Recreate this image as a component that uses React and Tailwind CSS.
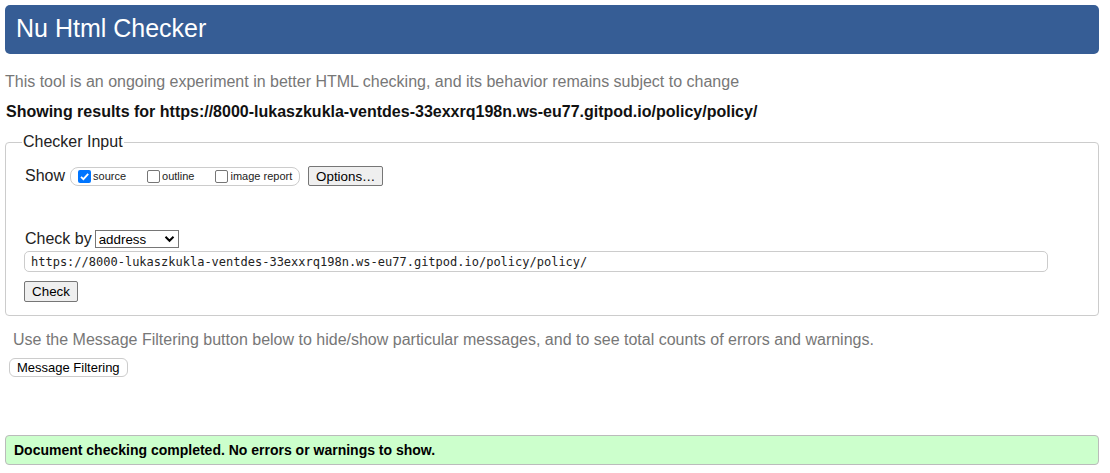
const URL = 'https://8000-lukaszkukla-ventdes-33exxrq198n.ws-eu77.gitpod.io/policy/policy/';

function Checkbox({ checked }) {
  if (checked) {
    return (
      <span className="flex h-[13px] w-[13px] items-center justify-center rounded-[2px] bg-[#0075ff]">
        <svg width="11" height="11" viewBox="0 0 11 11">
          <path d="M2 5.8 L4.4 8.2 L9.2 2.8" fill="none" stroke="white" strokeWidth="1.8" />
        </svg>
      </span>
    );
  }
  return <span className="h-[13px] w-[13px] rounded-[2px] border border-[#767676] bg-white" />;
}

function ShowOption({ label, checked, last }) {
  return (
    <label className={['flex items-center gap-[1px]', last ? '' : 'mr-[21px]'].join(' ')}>
      <Checkbox checked={checked} />
      <span className="ml-[1px] text-[11px] leading-[13px] text-[#222]">{label}</span>
    </label>
  );
}

function NativeButton({ children, className = '' }) {
  return (
    <button
      type="button"
      className={[
        'border border-[#767676] bg-[#efefef] text-[13.33px] leading-[15px] text-black',
        className,
      ].join(' ')}
    >
      {children}
    </button>
  );
}

export default function App() {
  return (
    <div className="min-h-screen bg-white font-['Liberation_Sans',Arial,sans-serif] text-[#222]">
      <div className="ml-[5px] w-[1094px] pt-[5px]">
        {/* Title bar */}
        <div className="flex h-[49px] items-center rounded-[5px] bg-[#365d95] pl-[11px] pb-[2px] text-[25px] text-white">
          Nu Html Checker
        </div>

        <p className="mt-[19px] text-[16px] leading-[18px] text-[#777]">
          This tool is an ongoing experiment in better HTML checking, and its behavior remains subject to change
        </p>
        <p className="mt-[12px] pl-[1px] text-[16px] font-bold leading-[18px] text-[#111]">
          Showing results for {URL}
        </p>

        <fieldset className="mt-[12px] rounded-[4px] border border-[#ccc] px-[19px] pt-[15px] pb-[12px]">
          <legend className="-ml-[3px] px-[1px] text-[16px] leading-[18px] text-[#222]">Checker Input</legend>

          <div className="flex items-center">
            <span className="text-[16px] leading-[18px]">Show</span>
            <div className="ml-[5px] flex h-[19px] items-center rounded-[8px] border border-[#ccc] px-[7px]">
              <ShowOption label="source" checked />
              <ShowOption label="outline" />
              <ShowOption label="image report" last />
            </div>
            <NativeButton className="ml-[8px] h-[20px] w-[75px] rounded-[2px]">Options…</NativeButton>
          </div>

          <div className="mt-[44px] flex items-center">
            <span className="text-[16px] leading-[18px]">Check by</span>
            <div className="ml-[3px] flex h-[18px] w-[84px] items-center justify-between border border-[#767676] bg-white pl-[3px] pr-[3px] text-[13.33px] leading-[15px] text-black">
              <span>address</span>
              <svg width="11" height="8" viewBox="0 0 11 8">
                <path d="M1.5 1.8 L5.5 5.8 L9.5 1.8" fill="none" stroke="black" strokeWidth="2" />
              </svg>
            </div>
          </div>

          <div className="-ml-[1px] mt-[3px] flex h-[21px] w-[1024px] items-center rounded-[5px] border border-[#ccc] pl-[6px] font-['DejaVu_Sans_Mono','Liberation_Mono',monospace] text-[12px] text-[#222]">
            {URL}
          </div>

          <NativeButton className="-ml-[1px] mt-[9px] h-[21px] w-[54px] rounded-[2px]">Check</NativeButton>
        </fieldset>

        <p className="mt-[15px] pl-[8px] text-[16px] leading-[18px] text-[#777]">
          Use the Message Filtering button below to hide/show particular messages, and to see total counts of errors and warnings.
        </p>
        <button
          type="button"
          className="mt-[9px] ml-[4px] h-[19px] rounded-[6px] border border-[#ccc] bg-white px-[7px] text-[13px] leading-[15px] text-black"
        >
          Message Filtering
        </button>

        <div className="mt-[56px] flex h-[30px] items-center rounded-[4px] border border-[#bbb] bg-[#ccffcc] pl-[8px] text-[14px] font-bold text-black">
          Document checking completed. No errors or warnings to show.
        </div>
      </div>
    </div>
  );
}
